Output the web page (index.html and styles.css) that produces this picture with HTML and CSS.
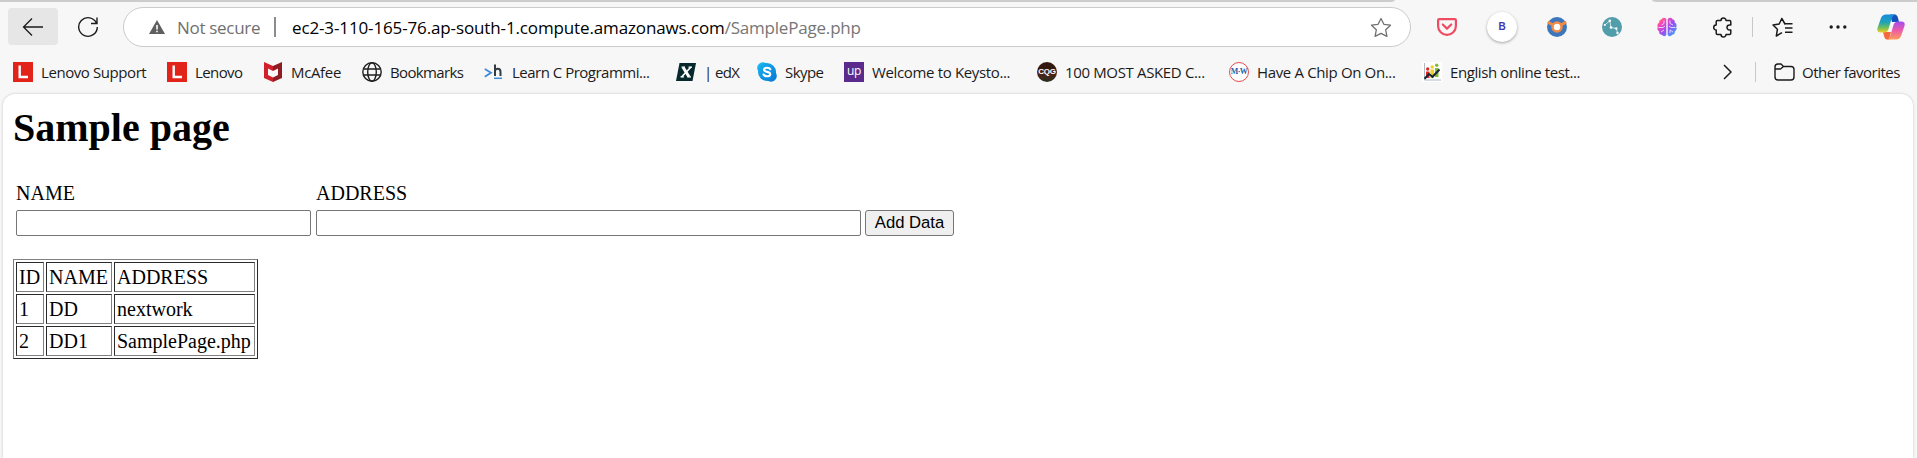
FILE: index.html
```html
<!DOCTYPE html>
<html lang="en">
<head>
<meta charset="utf-8">
<title>Sample page</title>
<link rel="stylesheet" href="styles.css">
</head>
<body>
<div class="tabstrip"><div class="strip-left"></div><div class="strip-right"></div></div>
<header class="toolbar">
  <button class="back" aria-label="Back"><svg width="22" height="20" viewBox="0 0 22 20"><path d="M10 1.500 1.500 10l8.500 8.500M1.500 10H21" fill="none" stroke="#1b1b1b" stroke-width="1.300"/></svg></button>
  <svg class="reload" width="22" height="22" viewBox="0 0 22 22"><path d="M19.500 7.200A9.300 9.300 0 1 0 20.300 11M20 1.500V7.500H14" fill="none" stroke="#1b1b1b" stroke-width="1.400"/></svg>
  <div class="address">
    <svg class="warn" width="16" height="14" viewBox="0 0 16 14"><path d="M8 0 16 14H0Z" fill="#5f5f5f"/><path d="M8 5v4.500M8 10.700v1.600" stroke="#fff" stroke-width="1.600"/></svg>
    <span class="insecure">Not secure</span>
    <i class="bar"></i>
    <span class="url"><span class="host">ec2-3-110-165-76.ap-south-1.compute.amazonaws.com</span><span class="path">/SamplePage.php</span></span>
    <svg class="star" width="22" height="21" viewBox="0 0 22 21"><path d="M11 1.500 13.900 7.300 20.500 8.200 15.700 12.800 16.900 19.300 11 16.300 5.100 19.300 6.300 12.800 1.500 8.200 8.100 7.300Z" fill="none" stroke="#707070" stroke-width="1.300" stroke-linejoin="round"/></svg>
  </div>
  <div class="extensions">
    <svg class="e-pocket" width="20" height="18" viewBox="0 0 20 18"><path d="M2.200 1.100H17.800Q18.900 1.100 18.900 2.200V8A8.900 8.900 0 0 1 1.100 8V2.200Q1.100 1.100 2.200 1.100ZM5.800 6.500 10 10.600 14.200 6.500" fill="none" stroke="#ef4b62" stroke-width="2.200" stroke-linecap="round" stroke-linejoin="round"/></svg>
    <span class="e-b">B</span>
    <svg class="e-blue" width="20" height="20" viewBox="0 0 20 20"><circle cx="10" cy="10" r="10" fill="#3c76bd"/><path d="M.8 5 6 8M19.200 5 14 8" stroke="#f08a45" stroke-width="3"/><circle cx="10" cy="10" r="4.500" fill="#fff" stroke="#f08a45" stroke-width="2.500"/></svg>
    <svg class="e-teal" width="20" height="20" viewBox="0 0 20 20"><circle cx="10" cy="10" r="10" fill="#529daa"/><path d="M2.800 8 7.800 3.800 9 10.500 14.300 11.500 15.500 16" fill="none" stroke="#e5f4f5" stroke-width=".8"/><g fill="#fff"><circle cx="2.800" cy="8" r="1"/><circle cx="7.800" cy="3.800" r="1.300"/><circle cx="9" cy="10.500" r="1.300"/><circle cx="14.300" cy="11.500" r="1.200"/><circle cx="15.500" cy="16" r="1.200"/></g></svg>
    <svg class="e-brain" width="20" height="20" viewBox="0 0 20 20"><defs><linearGradient id="brain" x1="0" y1="0" x2="1" y2="1"><stop offset="0" stop-color="#f8a33d"/><stop offset=".25" stop-color="#fb43b5"/><stop offset=".55" stop-color="#9650f2"/><stop offset="1" stop-color="#27baf5"/></linearGradient></defs><path d="M9.300 2Q6.500-.5 4.500 2.200 2 2.500 2.200 5.500-.5 7 .8 10-.5 13 2.200 14.500 2 17.500 4.800 17.800 7 20.500 9.300 18ZM10.700 2Q13.500-.5 15.500 2.200 18 2.500 17.800 5.500 20.500 7 19.200 10 20.500 13 17.800 14.500 18 17.500 15.200 17.800 13 20.500 10.700 18Z" fill="url(#brain)"/><path d="M7 3.500v3L4.500 8M1.500 10.500H6L8 9M4 15l3-2M13 3.500v3l3 1.500M18.500 10.500H14L12 9M16 15l-3-2v3" fill="none" stroke="#f2ddff" stroke-width=".9"/></svg>
    <svg class="e-puzzle" width="20" height="21" viewBox="0 0 20 21"><path d="M4 3.500H8A2.500 2.500 0 0 1 13 3.500H16.500Q17.800 3.500 17.800 5V8H16.500A2.500 2.500 0 0 0 16.500 13H17.800V16Q17.800 17.500 16.500 17.500H13A2.500 2.500 0 0 1 8 17.500H4.500Q3.200 17.500 3.200 16V13A2.500 2.500 0 0 1 3.200 8V5Q3.200 3.500 4.500 3.500" fill="none" stroke="#1b1b1b" stroke-width="1.500" stroke-linejoin="round"/></svg>
    <i class="sep"></i>
    <svg class="e-fav" width="21" height="21" viewBox="0 0 21 21"><path d="M13.500 6.500H12.700L9.800 1.500 7.200 7 1 8 5.400 12.300 4.300 19 10 15.600" fill="none" stroke="#1b1b1b" stroke-width="1.500" stroke-linejoin="round"/><path d="M12 6.700h8.500M13 11h7.500M13 15.300h7.500" stroke="#1b1b1b" stroke-width="1.500"/></svg>
    <svg class="e-more" width="18" height="4" viewBox="0 0 18 4"><g fill="#1b1b1b"><circle cx="2.200" cy="2" r="1.700"/><circle cx="9" cy="2" r="1.700"/><circle cx="15.800" cy="2" r="1.700"/></g></svg>
    <svg class="e-copilot" width="28" height="26" viewBox="0 0 28 26"><defs><linearGradient id="cpa" x1="0" y1="0" x2="0" y2="1"><stop offset="0" stop-color="#168be0"/><stop offset=".45" stop-color="#21a4b5"/><stop offset=".75" stop-color="#79bf55"/><stop offset="1" stop-color="#f5cf26"/></linearGradient><linearGradient id="cpb" x1="0" y1="0" x2="0" y2="1"><stop offset="0" stop-color="#a34ded"/><stop offset=".5" stop-color="#ed5caa"/><stop offset="1" stop-color="#ff9c57"/></linearGradient></defs><path d="M13 .5H18Q20 .5 21 4L22 8H15Z" fill="#174fbd"/><path d="M6 18H14L12 25.500H10Q8 25.500 7 22Z" fill="#f36b3c"/><path d="M9 .5H18Q15.500 1.500 14.500 5L11.500 15Q10.500 18.500 7 18.500H3.500Q-.5 18.500.5 14L4 4Q5.300.5 9 .5Z" fill="url(#cpa)"/><path d="M19 25.500H10Q12.500 24.500 13.500 21L16.500 11Q17.500 7.500 21 7.500H24.500Q28.500 7.500 27.500 12L24 22Q22.700 25.500 19 25.500Z" fill="url(#cpb)"/></svg>
  </div>
</header>
<nav class="bookmarks">
  <a class="bm b1"><svg class="ico" viewBox="0 0 20 20"><path fill="#e2231a" d="M0 0h20v20H0z"/><path d="M6.700 3.500v11.500H15" fill="none" stroke="#fff" stroke-width="2.400"/></svg><span>Lenovo Support</span></a>
  <a class="bm b2"><svg class="ico" viewBox="0 0 20 20"><path fill="#e2231a" d="M0 0h20v20H0z"/><path d="M6.700 3.500v11.500H15" fill="none" stroke="#fff" stroke-width="2.400"/></svg><span>Lenovo</span></a>
  <a class="bm b3"><svg class="ico" viewBox="0 0 20 20"><path d="M1 0 10 4V9L5 6.500V13L10 15.500V20L1 16Z" fill="#d0202b"/><path d="M19 0 10 4V9L15 6.500V13L10 15.500V20L19 16Z" fill="#8f1c23"/></svg><span>McAfee</span></a>
  <a class="bm b4"><svg class="ico" viewBox="0 0 20 20"><g fill="none" stroke="#1f1f1f" stroke-width="1.400"><circle cx="10" cy="10" r="9.200"/><ellipse cx="10" cy="10" rx="4.300" ry="9.200"/><path d="M1.500 7h17M1.500 13h17"/></g></svg><span>Bookmarks</span></a>
  <a class="bm b5"><svg class="ico" viewBox="0 0 20 20"><path d="M.8 7 7 10.800.8 14.800" fill="none" stroke="#3d8bd6" stroke-width="1.800"/><path d="M11 2.500V14M11 9Q11.500 6.800 13.700 6.800 16.500 6.800 16.500 10V14" fill="none" stroke="#333b44" stroke-width="2"/><path d="M10 16.300h8" stroke="#3d8bd6" stroke-width="1.500"/></svg><span>Learn C Programmi...</span></a>
  <a class="bm b6"><svg class="ico" viewBox="0 0 20 20"><path d="M3.500 1H20L16.500 19H0Z" fill="#07282c"/><path d="M7 5.200 13 14.800" stroke="#fff" stroke-width="3"/><path d="M15 5 5.500 15" stroke="#fff" stroke-width="1.700"/><path d="M5.500 5.200H9M12.500 5.200H16M4.500 14.800H8M11.500 14.800H15" stroke="#fff" stroke-width="1.300"/></svg><span>| edX</span></a>
  <a class="bm b7"><svg class="ico" viewBox="0 0 20 20"><defs><linearGradient id="sky" x1="0" y1="0" x2="1" y2="1"><stop offset="0" stop-color="#18b4ee"/><stop offset="1" stop-color="#0879d7"/></linearGradient></defs><circle cx="6" cy="6" r="5.800" fill="#18b4ee"/><circle cx="14" cy="14" r="5.800" fill="#0a80da"/><circle cx="10" cy="10" r="9" fill="url(#sky)"/><path d="M13.300 7.300Q12.500 5.700 10 5.700 7.200 5.700 7 7.600 7 9.300 10 9.900 13.300 10.600 13.200 12.300 13 14.300 10.200 14.300 7.300 14.300 6.600 12.500" fill="none" stroke="#fff" stroke-width="2.100" stroke-linecap="round"/></svg><span>Skype</span></a>
  <a class="bm b8"><i class="ico up">up</i><span>Welcome to Keysto...</span></a>
  <a class="bm b9"><i class="ico cqg">CQG</i><span>100 MOST ASKED C...</span></a>
  <a class="bm b10"><i class="ico mw">M·W</i><span>Have A Chip On On...</span></a>
  <a class="bm b11"><svg class="ico" viewBox="0 0 20 20"><path fill="#fff" d="M0 0h20v20H0z"/><path d="M2.500 1v17H19" fill="none" stroke="#aeb8c4"/><path d="M4 9.500h3.500V16H4z" fill="#d92a27"/><circle cx="5.700" cy="7" r="1.700" fill="#d92a27"/><path d="M8.500 7.500H12V16H8.500z" fill="#f0cf20"/><circle cx="10.200" cy="5" r="1.700" fill="#f0cf20"/><path d="M13 6h3.500v9H13z" fill="#81bd2e"/><circle cx="14.700" cy="3.200" r="1.700" fill="#81bd2e"/><path d="M2.500 16.800 7 12l3.500 2.800L17.500 7.500" fill="none" stroke="#17263a" stroke-width="2"/></svg><span>English online test...</span></a>
  <div class="overflow">
    <svg width="9" height="16" viewBox="0 0 9 16"><path d="M1 1 8 8 1 15" fill="none" stroke="#1b1b1b" stroke-width="1.500"/></svg>
    <i class="sep"></i>
    <svg class="folder" width="21" height="18" viewBox="0 0 21 18"><path d="M1 4Q1 1 4 1H7L9.500 3.500H17Q20 3.500 20 6.500V14Q20 17 17 17H4Q1 17 1 14ZM1 6H6.500L9.500 3.500" fill="none" stroke="#1b1b1b" stroke-width="1.400" stroke-linejoin="round"/></svg>
    <span class="other">Other favorites</span>
  </div>
</nav>
<main class="page">
  <h1>Sample page</h1>
  <form class="entry">
    <label for="name">NAME</label><label for="addr">ADDRESS</label><span></span>
    <input id="name" type="text"><input id="addr" type="text"><button type="button">Add Data</button>
  </form>
  <table class="data">
    <colgroup><col class="c-id"><col class="c-name"><col class="c-addr"></colgroup>
    <tr><td>ID</td><td>NAME</td><td>ADDRESS</td></tr>
    <tr><td>1</td><td>DD</td><td>nextwork</td></tr>
    <tr><td>2</td><td>DD1</td><td>SamplePage.php</td></tr>
  </table>
</main>
</body>
</html>
```
FILE: styles.css
```css
* { box-sizing: border-box; }
html, body { height: 100%; }
body {
  margin: 0;
  display: flex;
  flex-direction: column;
  overflow: hidden;
  background: #f7f7f7;
  color: #1b1b1b;
  font-family: "Open Sans", "Noto Sans", sans-serif;
}
svg { display: block; flex: none; }
i { font-style: normal; flex: none; }

.tabstrip { display: flex; justify-content: space-between; height: 7px; flex: none; }
.tabstrip div { height: 2px; background: #ccc; }
.strip-left { width: 1395px; border-bottom-right-radius: 6px 2px; }
.strip-right { width: 265px; border-bottom-left-radius: 6px 2px; }

.toolbar { display: flex; align-items: flex-start; height: 41px; padding-left: 8px; flex: none; }
.back {
  display: flex; align-items: center; justify-content: center;
  width: 50px; height: 37px; margin-top: 1px; padding: 0;
  border: 0; border-radius: 4px; background: #e6e6e6;
}
.reload { margin: 9px 0 0 19px; }
.address {
  display: flex; align-items: center;
  width: 1288px; height: 40px; margin-left: 24px; padding: 0 18px 0 25px;
  border: 1px solid #cbcbcb; border-radius: 20px; background: #fff;
  white-space: nowrap;
}
.insecure { width: 84px; margin-left: 12px; font-size: 17px; letter-spacing: -.3px; color: #707070; }
.bar { width: 2px; height: 20px; margin-left: 13px; background: #8c8c8c; }
.url { margin-left: 16px; font-size: 17px; }
.host { color: #000; letter-spacing: -.13px; }
.path { color: #767676; letter-spacing: -.2px; }
.star { margin-left: auto; }
.extensions { display: flex; align-items: center; height: 40px; }
.e-pocket { margin-left: 26px; }
.e-b {
  width: 30px; height: 30px; margin-left: 30px; border-radius: 50%;
  background: #fff; box-shadow: 0 1px 3px rgba(0,0,0,.35);
  color: #4038b0; font: bold 10px/30px "Liberation Sans", sans-serif; text-align: center;
}
.e-blue { margin-left: 30px; }
.e-teal { margin-left: 35px; }
.e-brain { margin-left: 35px; }
.e-puzzle { margin-left: 36px; }
.sep { width: 1px; height: 20px; background: #c8c8c8; }
.extensions .sep { margin-left: 19px; }
.e-fav { margin-left: 19px; }
.e-more { margin-left: 36px; }
.e-copilot { margin-left: 30px; }

.bookmarks { display: flex; align-items: center; height: 46px; padding: 2px 0 0 13px; flex: none; }
.bm { display: flex; align-items: center; gap: 8px; flex: none; font-size: 15px; white-space: nowrap; letter-spacing: -.35px; }
.bm span { margin-top: -1px; }
.ico { width: 20px; height: 20px; flex: none; }
.b1 { width: 154px; letter-spacing: -.42px; }
.b2 { width: 96px; letter-spacing: -.6px; }
.b3 { width: 99px; }
.b4 { width: 122px; letter-spacing: -.65px; }
.b5 { width: 192px; letter-spacing: -.5px; }
.b6 { width: 81px; letter-spacing: -.6px; }
.b7 { width: 87px; letter-spacing: -.55px; }
.b8 { width: 193px; }
.b9 { width: 192px; }
.b10 { width: 193px; }
.b11 { width: 170px; letter-spacing: -.4px; }
.up { background: #5a2a8c; color: #fff; font: 12px/18px "Open Sans", sans-serif; text-align: center; }
.cqg { border-radius: 50%; background: linear-gradient(#32190f 30%, #552015 55%, #26301f); color: #fff; font: bold 8px/19px "Liberation Sans", sans-serif; text-align: center; letter-spacing: -.3px; overflow: hidden; }
.mw { border: 1px solid #e54b51; border-radius: 50%; background: #fff; color: #265da3; font: bold 8px/18px "Liberation Serif", serif; display: flex; justify-content: center; letter-spacing: -.5px; }
.overflow { display: flex; align-items: center; margin-left: auto; padding-right: 16px; }
.overflow .sep { margin: 0 18px 0 23px; }
.other { width: 99px; margin: -1px 0 0 7px; font-size: 15px; letter-spacing: -.5px; white-space: nowrap; }

.page {
  flex: 1; margin: 0 4px 0 3px; padding: 11px 10px 0;
  border-radius: 12px 12px 0 0; background: #fff;
  box-shadow: 0 0 3px rgba(0,0,0,.2);
  color: #000; font: 20px "Liberation Serif", serif;
}
h1 { margin: 0; font-size: 40px; line-height: 45px; }
.entry {
  display: grid; grid-template-columns: 295px 545px 89px; column-gap: 5px;
  grid-template-rows: 23px 26px; row-gap: 5px;
  margin: 32px 0 0 3px;
}
.entry label { line-height: 23px; }
.entry input { width: 100%; height: 26px; margin: 0; padding: 0 2px; border: 1px solid #767676; border-radius: 2px; background: #fff; }
.entry button { margin: 0 0 0 -1px; width: 89px; height: 26px; padding: 0; border: 1px solid #767676; border-radius: 3px; background: #efefef; color: #000; font: 16.670px/22px "Liberation Sans", sans-serif; }
.data {
  table-layout: fixed; width: 245px; height: 100px; margin-top: 23px;
  border: 1px solid; border-color: #808080 #2b2b2b #2b2b2b #808080;
  border-spacing: 2px; border-collapse: separate;
}
.data td { height: 30px; padding: 0 2px; border: 1px solid; border-color: #2b2b2b #808080 #808080 #2b2b2b; line-height: 24px; white-space: nowrap; }
.c-id { width: 28px; }
.c-name { width: 66px; }
.c-addr { width: 141px; }
```
